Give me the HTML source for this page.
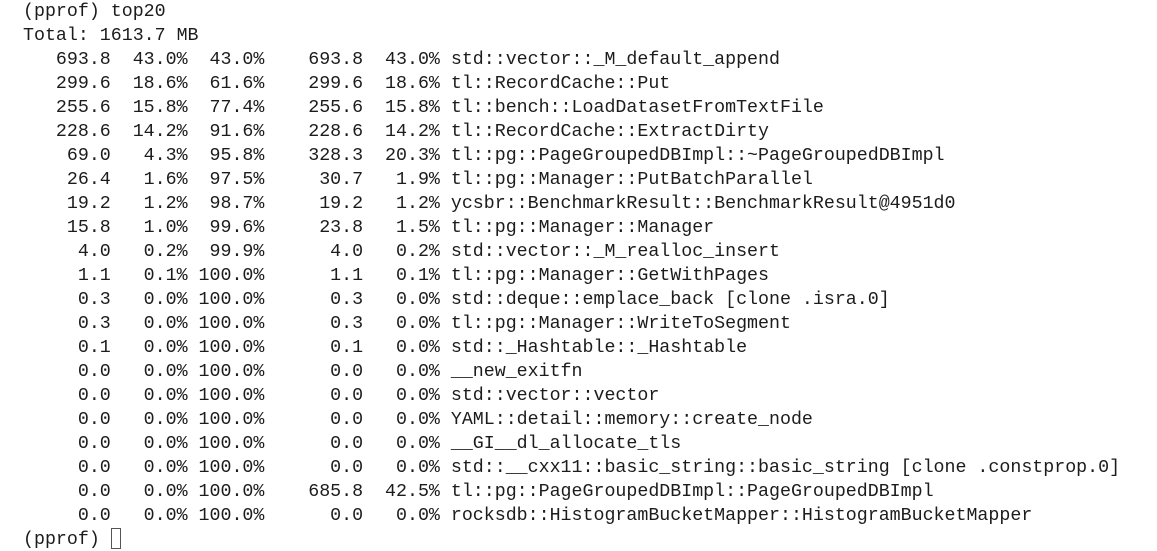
<!DOCTYPE html>
<html><head><style>
html,body{margin:0;padding:0;background:#fff;width:1157px;height:551px;overflow:hidden}
pre{margin:0;padding:0 0 0 23px;font-family:"Liberation Mono",monospace;font-size:18.3px;line-height:24px;color:#1c1c1c;white-space:pre}
.c{display:inline-block;width:10px;height:21px;border:1.5px solid #555;vertical-align:-5px;box-sizing:border-box}
</style></head><body><pre>(pprof) top20
Total: 1613.7 MB
   693.8  43.0%  43.0%    693.8  43.0% std::vector::_M_default_append
   299.6  18.6%  61.6%    299.6  18.6% tl::RecordCache::Put
   255.6  15.8%  77.4%    255.6  15.8% tl::bench::LoadDatasetFromTextFile
   228.6  14.2%  91.6%    228.6  14.2% tl::RecordCache::ExtractDirty
    69.0   4.3%  95.8%    328.3  20.3% tl::pg::PageGroupedDBImpl::~PageGroupedDBImpl
    26.4   1.6%  97.5%     30.7   1.9% tl::pg::Manager::PutBatchParallel
    19.2   1.2%  98.7%     19.2   1.2% ycsbr::BenchmarkResult::BenchmarkResult@4951d0
    15.8   1.0%  99.6%     23.8   1.5% tl::pg::Manager::Manager
     4.0   0.2%  99.9%      4.0   0.2% std::vector::_M_realloc_insert
     1.1   0.1% 100.0%      1.1   0.1% tl::pg::Manager::GetWithPages
     0.3   0.0% 100.0%      0.3   0.0% std::deque::emplace_back [clone .isra.0]
     0.3   0.0% 100.0%      0.3   0.0% tl::pg::Manager::WriteToSegment
     0.1   0.0% 100.0%      0.1   0.0% std::_Hashtable::_Hashtable
     0.0   0.0% 100.0%      0.0   0.0% __new_exitfn
     0.0   0.0% 100.0%      0.0   0.0% std::vector::vector
     0.0   0.0% 100.0%      0.0   0.0% YAML::detail::memory::create_node
     0.0   0.0% 100.0%      0.0   0.0% __GI__dl_allocate_tls
     0.0   0.0% 100.0%      0.0   0.0% std::__cxx11::basic_string::basic_string [clone .constprop.0]
     0.0   0.0% 100.0%    685.8  42.5% tl::pg::PageGroupedDBImpl::PageGroupedDBImpl
     0.0   0.0% 100.0%      0.0   0.0% rocksdb::HistogramBucketMapper::HistogramBucketMapper
(pprof) <span class="c"></span></pre></body></html>
